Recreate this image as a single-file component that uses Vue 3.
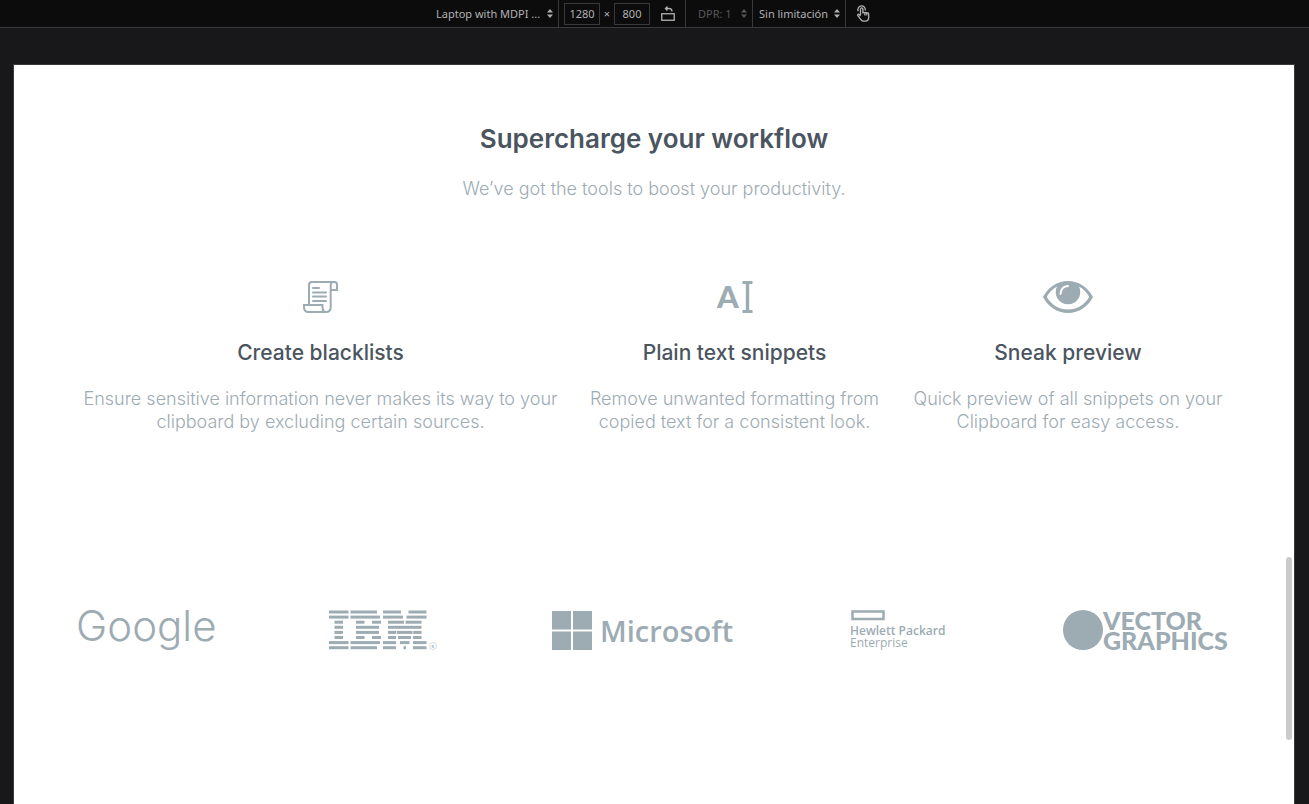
<script setup>
import { ref } from 'vue'

const width = ref('1280')
const height = ref('800')

const features = [
  {
    icon: 'scroll',
    title: 'Create blacklists',
    text: 'Ensure sensitive information never makes its way to your clipboard by excluding certain sources.'
  },
  {
    icon: 'text',
    title: 'Plain text snippets',
    text: 'Remove unwanted formatting from copied text for a consistent look.'
  },
  {
    icon: 'eye',
    title: 'Sneak preview',
    text: 'Quick preview of all snippets on your Clipboard for easy access.'
  }
]

// Each row of the striped logo: [start, end] pairs of its bars.
const stripes = [
  [[0, 19.5], [21.5, 48], [54, 72], [79.5, 97.5]],
  [[0, 19.5], [21.5, 51], [54, 74], [77.5, 97.5]],
  [[5.5, 14], [27, 35.5], [43, 52], [59, 75], [76.5, 92.5]],
  [[5.5, 14], [27, 50], [59, 92.5]],
  [[5.5, 14], [27, 50], [59, 67], [67.7, 83.5], [84.2, 92.5]],
  [[5.5, 14], [27, 35.5], [43, 52], [59, 67], [69, 82], [84, 92.5]],
  [[0, 19.5], [21.5, 51], [54, 67], [71, 80.5], [84, 97.5]],
  [[0, 19.5], [21.5, 48], [54, 67], [74.5, 77], [84, 97.5]]
]
</script>

<template>
  <div class="tool">
    <header class="toolbar">
      <label class="cell device">
        <select aria-label="Device"><option>Laptop with MDPI ...</option></select>
        <svg class="arrows" viewBox="0 0 6 9"><path d="M3 0 6 3.5H0zM3 9 0 5.5h6z" /></svg>
      </label>
      <div class="cell size">
        <input v-model="width" aria-label="Width" type="text">
        <span>×</span>
        <input v-model="height" aria-label="Height" type="text">
        <button type="button" aria-label="Rotate viewport">
          <svg width="16" height="17" viewBox="0 0 16 17">
            <rect x="1.75" y="8.75" width="12.5" height="6.5" />
            <path d="M5.500 3.500h3.500c2 0 3 .8 3 3M7.500 1.500 5.500 3.500 7.500 5.500" />
          </svg>
        </button>
      </div>
      <label class="cell dpr">
        <select aria-label="Device pixel ratio" disabled><option>DPR: 1</option></select>
        <svg class="arrows" viewBox="0 0 6 9"><path d="M3 0 6 3.5H0zM3 9 0 5.5h6z" /></svg>
      </label>
      <label class="cell throttle">
        <select aria-label="Throttling"><option>Sin limitación</option></select>
        <svg class="arrows" viewBox="0 0 6 9"><path d="M3 0 6 3.5H0zM3 9 0 5.5h6z" /></svg>
      </label>
      <div class="cell touch">
        <button type="button" aria-label="Touch simulation">
          <svg width="14" height="17" viewBox="0 0 14 17">
            <path d="M4.500 10V4a1.200 1.200 0 0 1 2.400 0v4.500M6.900 8.500c0-1.500 2-1.500 2 0 0-1.400 1.900-1.300 1.900.2 0-1.200 1.900-1.200 1.900.3v3.500c0 2.500-1.400 3.700-3.500 3.700H7.500c-1.500 0-2.300-.8-3-2L1.700 10.500c-.5-1 .7-1.800 1.500-1L4.500 11M2.300 6.300A3.700 3.700 0 1 1 9.200 5.500M8.900 8.500V10.500M10.800 8.700v1.800" />
          </svg>
        </button>
      </div>
    </header>

    <main class="page">
      <section class="intro">
        <h1>Supercharge your workflow</h1>
        <p>We’ve got the tools to boost your productivity.</p>
      </section>

      <section class="features">
        <article v-for="f in features" :key="f.icon">
          <svg v-if="f.icon === 'scroll'" width="36" height="32" viewBox="0 0 36 32" class="line">
            <path d="M6 23V4q0-3 3-3H31.500q2.500 0 2.500 2.500V9h-6" />
            <path d="M30.500 1Q27.700 1 27.700 4V26q0 5-5 5H5.500q-4.500 0-4.500-5V24H19.500v2q0 5 3.500 5" />
            <path d="M10 7h6M10 11.500h13M10 15.500h13M10 20h13" stroke-linecap="round" />
          </svg>
          <svg v-else-if="f.icon === 'text'" width="36" height="32" viewBox="0 0 36 32">
            <text class="letter" x="0" y="27">A</text>
            <path d="M25.500 0H35.500V3H32.200V29H35.500V32H25.500V29H28.800V3H25.500z" />
          </svg>
          <svg v-else width="50" height="32" viewBox="0 0 50 32">
            <path fill-rule="evenodd" d="M25 0C36 0 45 6.500 50 16 45 25.500 36 32 25 32S5 25.500 0 16C5 6.500 14 0 25 0zM14 5.500C9.500 7.800 6 11.500 3.800 16 8.500 24 16 28.500 25 28.500S41.500 24 46.200 16C44 11.500 40.500 7.800 36 5.500A12.300 12.300 0 1 1 14 5.500z" />
            <path d="M17.500 13Q18 5.500 25 5" fill="none" stroke="#fff" stroke-width="2" stroke-linecap="round" />
          </svg>
          <h2>{{ f.title }}</h2>
          <p>{{ f.text }}</p>
        </article>
      </section>

      <section class="logos" aria-label="Customers">
        <svg width="136" height="44" viewBox="0 0 136 44">
          <text class="google" x="-2" y="33">Google</text>
        </svg>
        <svg width="109" height="44" viewBox="0 0 109 44" role="img" aria-label="IBM">
          <g v-for="(row, i) in stripes" :key="i">
            <rect v-for="bar in row" :key="bar[0]" :x="bar[0]" :y="2.5 + i * 5.1" :width="bar[1] - bar[0]" height="3" />
          </g>
          <circle class="mark" cx="104" cy="38" r="3.500" />
          <text class="registered" x="102.500" y="40">R</text>
        </svg>
        <svg width="184" height="44" viewBox="0 0 184 44">
          <path d="M0 3h19v18.500H0zM21 3h19v18.500H21zM0 23.500h19V42H0zM21 23.500h19V42H21z" />
          <text class="microsoft" x="48" y="34">Microsoft</text>
        </svg>
        <svg width="98" height="44" viewBox="0 0 98 44">
          <rect class="frame" x="1.500" y="3.500" width="31" height="7.500" />
          <text class="hewlett" x="-1" y="27">Hewlett Packard</text>
          <text class="enterprise" x="-1" y="39">Enterprise</text>
        </svg>
        <svg width="168" height="44" viewBox="0 0 168 44">
          <circle cx="20" cy="22" r="20" />
          <text class="vector" x="40" y="22">VECTOR</text>
          <text class="vector" x="40" y="42">GRAPHICS</text>
        </svg>
      </section>
      <div class="thumb"></div>
    </main>
  </div>
</template>

<style>
body {
  margin: 0;
  background: #18181a;
}
</style>

<style scoped>
.tool {
  display: flex;
  flex-direction: column;
  height: 100vh;
  overflow: hidden;
  font-family: Inter, "Open Sans", sans-serif;
}
.toolbar {
  display: flex;
  justify-content: center;
  height: 27px;
  flex: none;
  background: #0c0c0d;
  border-bottom: 1px solid #38383d;
  font: 11px "Noto Sans", sans-serif;
  color: #b1b1b3;
}
.cell {
  display: flex;
  align-items: center;
  position: relative;
  box-sizing: border-box;
  border-right: 1px solid #38383d;
}
.device { width: 129px; }
.size { width: 127px; padding-left: 5px; }
.dpr { width: 67px; color: #57575a; }
.throttle { width: 93px; }
.touch { width: 33px; border: 0; justify-content: center; }
.cell select {
  appearance: none;
  width: 100%;
  height: 26px;
  padding: 0 0 0 6px;
  border: 0;
  background: transparent;
  color: inherit;
  font: inherit;
  opacity: 1;
}
.dpr select { padding-left: 12px; }
.arrows {
  position: absolute;
  right: 5px;
  width: 6px;
  height: 9px;
  fill: currentColor;
  pointer-events: none;
}
.size input {
  box-sizing: border-box;
  width: 36px;
  height: 22px;
  padding: 0;
  border: 1px solid #38383d;
  background: #0c0c0d;
  color: inherit;
  font: inherit;
  text-align: center;
}
.size span { width: 14px; text-align: center; }
button {
  display: flex;
  padding: 0;
  border: 0;
  background: none;
  color: inherit;
}
.size button { margin-left: 10px; }
button svg {
  fill: none;
  stroke: currentColor;
  stroke-width: 1.3;
}
.page {
  position: relative;
  flex: 1;
  margin: 36px 14px 0 13px;
  border: 1px solid #38383d;
  border-bottom: 0;
  background: #fff;
  color: #9dabb3;
}
.intro {
  padding-top: 56px;
  text-align: center;
}
h1, h2 {
  margin: 0;
  color: #4b555f;
  font-weight: 500;
}
h1 {
  font-size: 26px;
  font-weight: 600;
  line-height: 36px;
}
p {
  margin: 0;
  font-size: 18px;
  font-weight: 300;
  line-height: 23px;
}
.intro p { margin-top: 20px; }
.features {
  display: grid;
  grid-template-columns: 477fr 303fr 316fr;
  gap: 24px;
  margin-top: 81px;
  padding: 0 68px;
  text-align: center;
}
.features svg {
  display: block;
  margin: 0 auto;
  fill: currentColor;
  overflow: visible;
}
.features .line {
  fill: none;
  stroke: currentColor;
  stroke-width: 2;
}
.letter {
  font: 900 31px Lato, sans-serif;
}
h2 {
  margin: 26px 0 20px;
  font-size: 21px;
  line-height: 28px;
}
.logos {
  display: flex;
  justify-content: space-between;
  margin-top: 175px;
  padding: 0 63px 0 64px;
}
.logos svg {
  fill: currentColor;
  overflow: visible;
}
.google { font: 300 42px Inter, sans-serif; }
.microsoft { font: 600 29px "Open Sans", sans-serif; }
.hewlett { font: 600 12px "Open Sans", sans-serif; }
.enterprise { font: 400 12px "Open Sans", sans-serif; }
.vector { font: 900 25px Lato, sans-serif; }
.registered { font: 700 4px Lato, sans-serif; }
.mark {
  fill: none;
  stroke: currentColor;
  stroke-width: .4;
}
.frame {
  fill: none;
  stroke: currentColor;
  stroke-width: 2.500;
}
.thumb {
  position: absolute;
  top: 492px;
  right: 2px;
  width: 6px;
  height: 183px;
  border-radius: 3px;
  background: #cbcbcb;
}
</style>
